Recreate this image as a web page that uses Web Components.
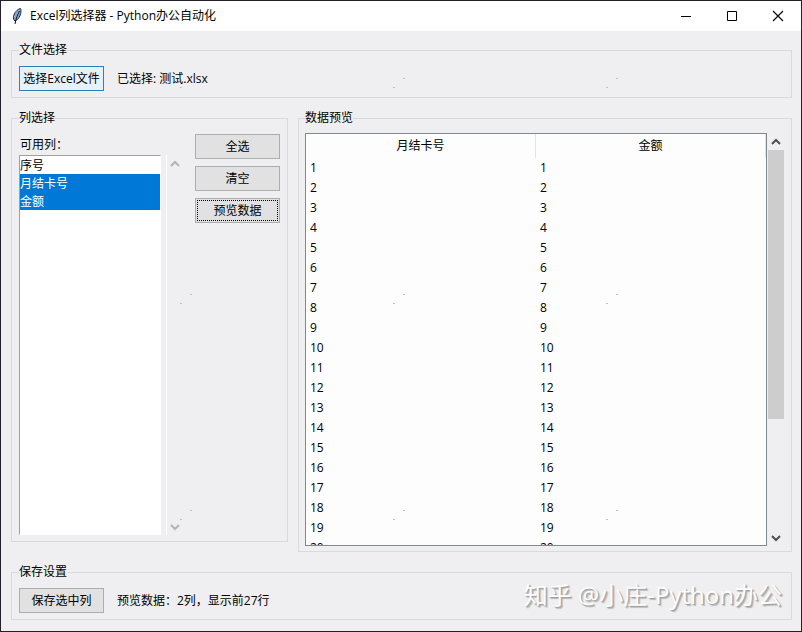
<!DOCTYPE html>
<html lang="zh-CN">
<head>
<meta charset="utf-8">
<title>Excel列选择器 - Python办公自动化</title>
<style>
  html, body { height: 100%; }
  body {
    margin: 0;
    background: #efeff1;
    color: #000;
    font: 12px/16px "Open Sans", "Noto Sans CJK SC", sans-serif;
  }
  .actions {
    display: flex;
    align-items: center;
    gap: 13px;
  }
  .columns {
    display: flex;
    flex: 1;
    min-height: 0;
    gap: 10px;
  }
  .pick { margin-bottom: 10px; }
  .preview { flex: 1; --pad: 6px 7px 5px 6px; }
  .picker {
    display: flex;
    height: 100%;
  }
  .buttons {
    display: flex;
    flex-direction: column;
    gap: 7px;
    margin-left: 12px;
  }
  .preview-area {
    display: flex;
    height: 100%;
    gap: 1px;
  }
</style>
</head>
<body>
<app-window title-text="Excel列选择器 - Python办公自动化">
  <group-box label="文件选择">
    <div class="actions">
      <tk-button kind="hot">选择Excel文件</tk-button>
      <span>已选择: 测试.xlsx</span>
    </div>
  </group-box>
  <div class="columns">
    <group-box class="pick" label="列选择">
      <div class="picker">
        <list-box label="可用列：" items="序号,月结卡号,金额" selected="月结卡号,金额"></list-box>
        <div class="buttons">
          <tk-button>全选</tk-button>
          <tk-button>清空</tk-button>
          <tk-button kind="focused">预览数据</tk-button>
        </div>
      </div>
    </group-box>
    <group-box class="preview" label="数据预览">
      <div class="preview-area">
        <data-table columns="月结卡号,金额" rows="20"></data-table>
        <scroll-bar thumb></scroll-bar>
      </div>
    </group-box>
  </div>
  <group-box label="保存设置">
    <div class="actions">
      <tk-button>保存选中列</tk-button>
      <span>预览数据：2列，显示前27行</span>
    </div>
  </group-box>
  <water-mark slot="overlay">知乎 @小庄-Python办公</water-mark>
</app-window>

<script>
class AppWindow extends HTMLElement {
  constructor() {
    super();
    this.attachShadow({ mode: 'open' });
  }

  connectedCallback() {
    this.shadowRoot.innerHTML = `
      <style>
        :host {
          display: flex;
          flex-direction: column;
          position: relative;
          box-sizing: border-box;
          height: 100vh;
          border: 1px solid #251f2e;
          background: #efeff1;
        }
        header {
          display: flex;
          align-items: center;
          height: 30px;
          background: #fff;
        }
        h1 {
          flex: 1;
          margin: 0;
          font-size: 12px;
          font-weight: normal;
        }
        .feather { margin: 0 4px 0 7px; }
        header button {
          display: flex;
          align-items: center;
          justify-content: center;
          width: 46px;
          height: 30px;
          padding: 0;
          border: 0;
          background: none;
        }
        main {
          display: flex;
          flex-direction: column;
          flex: 1;
          min-height: 0;
          gap: 11px;
          padding: 10px 9px 11px 10px;
        }
      </style>
      <header>
        <svg class="feather" width="18" height="18" viewBox="0 0 18 18">
          <path d="M12.500 1.500C9.500 2 6 6 5.500 9.500c-.3 2 .3 3.500 1.500 4.500 2.500-1 5-4 5.700-7.500.4-2.300.5-4-.2-5z" fill="#86a6d8" stroke="#1c2536"/>
          <path d="M11.500 4C9.500 8 8 11 7 17" fill="none" stroke="#10151f"/>
        </svg>
        <h1>${this.getAttribute('title-text')}</h1>
        <button aria-label="最小化"><svg width="12" height="12"><path d="M1 6.500h10" stroke="#000"/></svg></button>
        <button aria-label="最大化"><svg width="12" height="12"><path d="M1.500 1.500h9v9h-9z" fill="none" stroke="#000"/></svg></button>
        <button aria-label="关闭"><svg width="12" height="12"><path d="M1 1l10 10M11 1L1 11" stroke="#000" stroke-width="1.100"/></svg></button>
      </header>
      <main><slot></slot></main>
      <slot name="overlay"></slot>
    `
  }
}
customElements.define('app-window', AppWindow);

class GroupBox extends HTMLElement {
  constructor() {
    super();
    this.attachShadow({ mode: 'open' });
  }

  connectedCallback() {
    this.shadowRoot.innerHTML = `
      <style>
        :host { display: block; min-width: 0; }
        fieldset {
          box-sizing: border-box;
          height: 100%;
          min-width: 0;
          margin: 0;
          padding: var(--pad, 7px 7px 6px);
          border: 1px solid #dadadc;
        }
        legend {
          padding: 0;
          line-height: 18px;
        }
      </style>
      <fieldset>
        <legend>${this.getAttribute('label')}</legend>
        <slot></slot>
      </fieldset>
    `
  }
}
customElements.define('group-box', GroupBox);

class TkButton extends HTMLElement {
  constructor() {
    super();
    this.attachShadow({ mode: 'open' });
  }

  connectedCallback() {
    this.shadowRoot.innerHTML = `
      <style>
        :host { display: block; }
        button {
          display: block;
          box-sizing: border-box;
          min-width: 85px;
          height: 25px;
          padding: 0 2px;
          border: 1px solid #adadad;
          background: #e1e1e1;
          color: inherit;
          font: inherit;
          white-space: nowrap;
        }
        :host([kind="hot"]) button {
          border-color: #2a82b8;
          background: #e5f1fb;
        }
        :host([kind="focused"]) button {
          outline: 1px dotted #000;
          outline-offset: -3px;
        }
      </style>
      <button><slot></slot></button>
    `
  }
}
customElements.define('tk-button', TkButton);

class ScrollBar extends HTMLElement {
  constructor() {
    super();
    this.attachShadow({ mode: 'open' });
  }

  connectedCallback() {
    let arrow = this.hasAttribute('thumb') ? '#505050' : '#b4b4b4'
    this.shadowRoot.innerHTML = `
      <style>
        :host {
          display: flex;
          flex-direction: column;
          width: 16px;
        }
        svg { display: block; flex: none; }
        .track { flex: 1; }
        .thumb { height: 71%; background: #cdcdcd; }
      </style>
      <svg width="16" height="17" viewBox="0 0 16 17"><path d="M4 11l4-4 4 4" fill="none" stroke="${arrow}" stroke-width="2"/></svg>
      <div class="track">${this.hasAttribute('thumb') ? '<div class="thumb"></div>' : ''}</div>
      <svg width="16" height="17" viewBox="0 0 16 17"><path d="M4 7l4 4 4-4" fill="none" stroke="${arrow}" stroke-width="2"/></svg>
    `
  }
}
customElements.define('scroll-bar', ScrollBar);

class ListBox extends HTMLElement {
  constructor() {
    super();
    this.attachShadow({ mode: 'open' });
  }

  connectedCallback() {
    let selected = this.getAttribute('selected').split(',')
    let options = this.getAttribute('items').split(',')
      .map(item => `<option ${selected.includes(item) ? 'selected' : ''}>${item}</option>`)
      .join('')

    this.shadowRoot.innerHTML = `
      <style>
        :host { display: flex; flex-direction: column; }
        label { padding-left: 1px; line-height: 21px; }
        .body {
          display: flex;
          flex: 1;
          min-height: 0;
          gap: 5px;
        }
        select {
          box-sizing: border-box;
          width: 142px;
          height: 100%;
          padding: 0;
          border: 1px solid #fff;
          border-top-color: #a0a0a0;
          border-left-color: #a0a0a0;
          border-radius: 0;
          outline: 0;
          background: #fff;
          color: #000;
          font: inherit;
          overflow: hidden;
        }
        option {
          height: 18px;
          min-height: 18px;
          padding: 0;
        }
        option:checked {
          background: linear-gradient(#0078d7, #0078d7);
          -webkit-text-fill-color: #fff;
        }
        scroll-bar { border-left: 1px solid #fff; }
      </style>
      <label for="list">${this.getAttribute('label')}</label>
      <div class="body">
        <select id="list" multiple>${options}</select>
        <scroll-bar></scroll-bar>
      </div>
    `
  }
}
customElements.define('list-box', ListBox);

class DataTable extends HTMLElement {
  constructor() {
    super();
    this.attachShadow({ mode: 'open' });
  }

  connectedCallback() {
    let columns = this.getAttribute('columns').split(',')
    let head = columns.map(name => `<th scope="col">${name}</th>`).join('')
    let body = ''
    for (let i = 1; i <= Number(this.getAttribute('rows')); i++) {
      body += `<tr>${columns.map(() => `<td>${i}</td>`).join('')}</tr>`
    }

    this.shadowRoot.innerHTML = `
      <style>
        :host {
          display: block;
          flex: 1;
          box-sizing: border-box;
          height: 100%;
          min-width: 0;
          border: 1px solid #828790;
          background: #fdfdfe;
          overflow: hidden;
        }
        table {
          width: 100%;
          border-collapse: separate;
          border-spacing: 0;
          table-layout: fixed;
        }
        th {
          height: 24px;
          padding: 0;
          border-right: 1px solid #e2e2e2;
          font-weight: normal;
        }
        td {
          height: 20px;
          padding: 0 4px;
          line-height: 20px;
        }
      </style>
      <table>
        <thead><tr>${head}</tr></thead>
        <tbody>${body}</tbody>
      </table>
    `
  }
}
customElements.define('data-table', DataTable);

class WaterMark extends HTMLElement {
  constructor() {
    super();
    this.attachShadow({ mode: 'open' });
  }

  connectedCallback() {
    // faint pairs of specks, repeated over the whole window
    this.shadowRoot.innerHTML = `
      <style>
        :host {
          position: absolute;
          inset: 0;
          display: flex;
          align-items: flex-end;
          justify-content: flex-end;
          padding: 0 19px 18px 0;
          background: url("data:image/svg+xml,%3Csvg xmlns='http://www.w3.org/2000/svg' width='213' height='216'%3E%3Cpath d='M189 77h2v1h-2zM179 86h2v1h-2z' fill='%23c0c0c4'/%3E%3C/svg%3E");
          color: #fdfdfd;
          font: 24px/36px "Open Sans", "Noto Sans CJK SC", sans-serif;
          text-shadow: 1px 1px 1px #a0a0a0, 2px 2px 1px #b8b8b8;
          white-space: nowrap;
          pointer-events: none;
        }
      </style>
      <slot></slot>
    `
  }
}
customElements.define('water-mark', WaterMark);
</script>
</body>
</html>
